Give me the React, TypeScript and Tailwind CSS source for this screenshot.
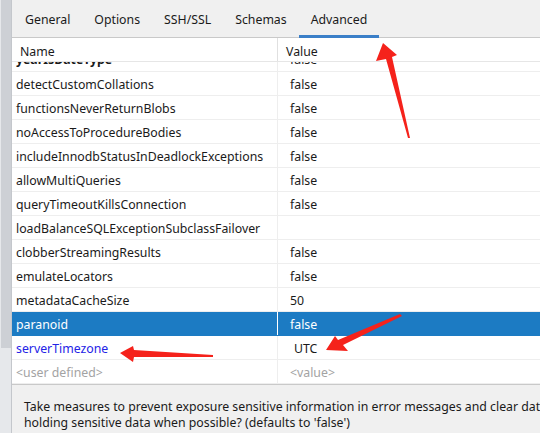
import React from "react";

const rows: { name: string; value: string; kind?: "sel" | "blue" | "ph" }[] = [
  { name: "detectCustomCollations", value: "false" },
  { name: "functionsNeverReturnBlobs", value: "false" },
  { name: "noAccessToProcedureBodies", value: "false" },
  { name: "includeInnodbStatusInDeadlockExceptions", value: "false" },
  { name: "allowMultiQueries", value: "false" },
  { name: "queryTimeoutKillsConnection", value: "false" },
  { name: "loadBalanceSQLExceptionSubclassFailover", value: "" },
  { name: "clobberStreamingResults", value: "false" },
  { name: "emulateLocators", value: "false" },
  { name: "metadataCacheSize", value: "50" },
  { name: "paranoid", value: "false", kind: "sel" },
  { name: "serverTimezone", value: "UTC", kind: "blue" },
  { name: "<user defined>", value: "<value>", kind: "ph" },
];

const tabs = ["General", "Options", "SSH/SSL", "Schemas", "Advanced"];

export default function App() {
  return (
    <div
      className="relative w-[540px] h-[433px] overflow-hidden flex bg-white text-[12.3px] text-[#1a1a1a]"
      style={{ fontFamily: '"Noto Sans", "Open Sans", sans-serif' }}
    >
      {/* left strip with scrollbar thumb */}
      <div className="w-[12px] shrink-0 bg-[#e6e8eb] border-r border-[#c4c7cc] flex flex-col">
        <div className="ml-[1px] w-[10px] h-[348px] bg-[#cdd0d5]" />
      </div>

      <div className="flex-1 flex flex-col min-w-0">
        {/* tab bar */}
        <div className="h-[38px] bg-[#f0f0f0] border-b border-[#c9c9c9] flex items-stretch">
          {tabs.map((t, i) => (
            <div key={t} className={"relative flex items-center pt-[4px] " + (i === 0 ? "pl-[13px] pr-[12px]" : "px-[12px]")}>
              <span className="leading-none">{t}</span>
              {t === "Advanced" && (
                <div className="absolute left-0 right-0 bottom-[-1px] h-[3px] bg-[#3b7fc8]" />
              )}
            </div>
          ))}
        </div>

        {/* header */}
        <div className="h-[24px] flex border-b border-[#e6e6e6] bg-white relative z-10">
          <div className="w-[266px] border-r border-[#e0e0e0] pl-[8px] pt-[5px] flex items-center">Name</div>
          <div className="flex-1 pl-[8px] pt-[5px] flex items-center">Value</div>
        </div>

        {/* rows */}
        <div className="h-[322px] overflow-hidden">
          <div className="mt-[-14px]">
            <div className="h-[24px] flex border-b border-[#eeeeee]">
              <div className="w-[266px] border-r border-[#eeeeee] pl-[4px] pt-[2px] flex items-center font-bold">yearIsDateType</div>
              <div className="flex-1 pl-[12px] pt-[2px] flex items-center">false</div>
            </div>
            {rows.map((r) => {
              const sel = r.kind === "sel";
              return (
                <div
                  key={r.name}
                  className={
                    "h-[24px] flex border-b " +
                    (sel ? "bg-[#1c7bc3] text-white border-[#1c7bc3]" : "border-[#eeeeee]")
                  }
                >
                  <div
                    className={
                      "w-[266px] border-r pl-[4px] pt-[3px] flex items-center " +
                      (sel ? "border-white" : "border-[#eeeeee]") +
                      (r.kind === "blue" ? " text-[#2323e6]" : "") +
                      (r.kind === "ph" ? " text-[#a3a3a3]" : "")
                    }
                  >
                    {r.name}
                  </div>
                  <div
                    className={
                      "flex-1 flex items-center pt-[3px] " +
                      (r.kind === "blue" ? "pl-[16px]" : "pl-[12px]") +
                      (r.kind === "ph" ? " text-[#a3a3a3]" : "")
                    }
                  >
                    {r.value}
                  </div>
                </div>
              );
            })}
          </div>
        </div>

        {/* description */}
        <div className="flex-1 bg-[#f0f0f0] border-t border-[#c9c9c9] pl-[12px] pt-[14px] leading-[16px] whitespace-nowrap text-[#1a1a1a]">
          <div>Take measures to prevent exposure sensitive information in error messages and clear data structures</div>
          <div>holding sensitive data when possible? (defaults to 'false')</div>
        </div>
      </div>

      {/* red annotation arrows */}
      <svg className="absolute inset-0 z-20 pointer-events-none" width="540" height="433" viewBox="0 0 540 433">
        <polygon fill="#f5221b" points="383,43 397,55 392,57 410,138 408,138 386,59 376,61" />
        <polygon fill="#f5221b" points="120,353 133,346 134,350 213,355 213,357 134,357 133,362" />
        <polygon fill="#f5221b" points="326,350 335,336 338,340 400,314 402,316 343,345 348,351" />
      </svg>
    </div>
  );
}
